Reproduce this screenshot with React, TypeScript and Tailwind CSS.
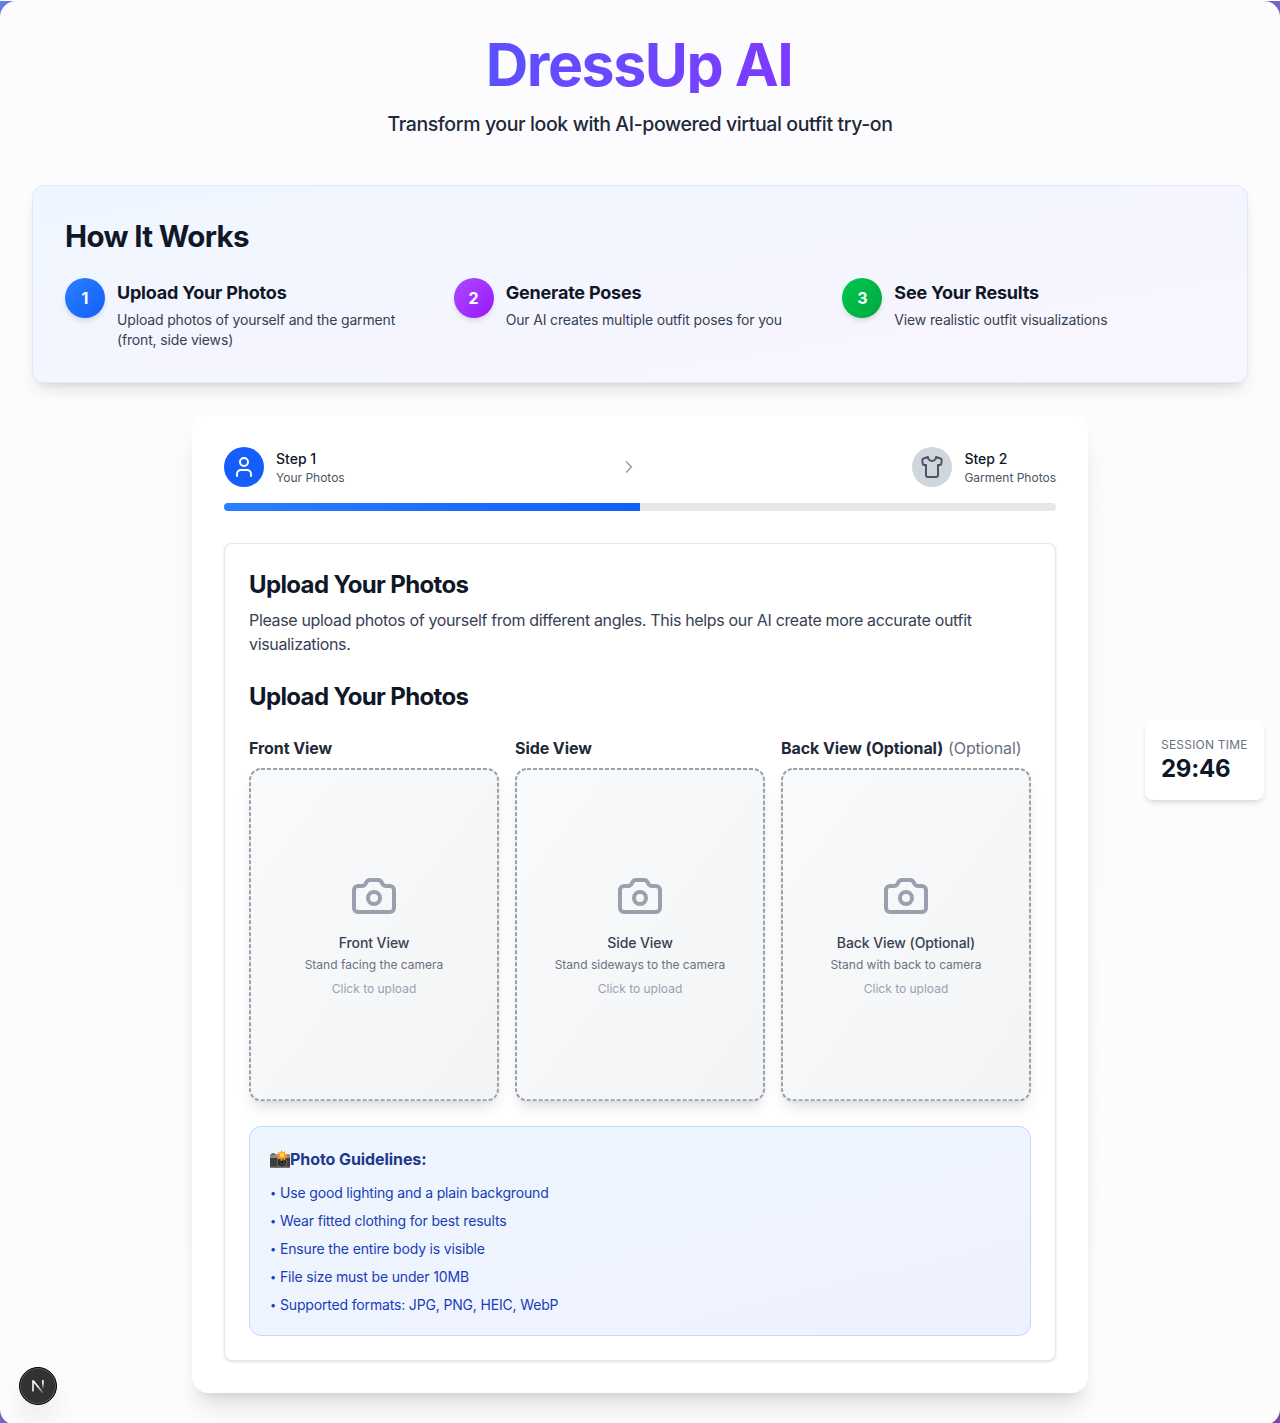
import React from "react";
import { Camera, ChevronRight, Shirt, User } from "lucide-react";

const howItWorks = [
  { n: "1", title: "Upload Your Photos", text: "Upload photos of yourself and the garment (front, side views)", tone: "bg-linear-to-br from-[#2b7fff] to-[#155dfc]" },
  { n: "2", title: "Generate Poses", text: "Our AI creates multiple outfit poses for you", tone: "bg-linear-to-br from-[#ad46ff] to-[#9810fa]" },
  { n: "3", title: "See Your Results", text: "View realistic outfit visualizations", tone: "bg-linear-to-br from-[#00c950] to-[#00a63e]" },
];

const views = [
  { label: "Front View", optional: false, hint: "Stand facing the camera" },
  { label: "Side View", optional: false, hint: "Stand sideways to the camera" },
  { label: "Back View (Optional)", optional: true, hint: "Stand with back to camera" },
];

const guidelines = [
  "Use good lighting and a plain background",
  "Wear fitted clothing for best results",
  "Ensure the entire body is visible",
  "File size must be under 10MB",
  "Supported formats: JPG, PNG, HEIC, WebP",
];

function CameraFlash() {
  return (
    <svg width="20" height="20" viewBox="0 0 20 20" className="mt-px shrink-0">
      <rect x="0" y="4.4" width="20" height="13.4" rx="1.2" fill="#3d3d3d" />
      <rect x="0" y="4.4" width="20" height="3.6" rx="1" fill="#8d8b86" />
      <rect x="0" y="16.4" width="20" height="1.4" rx="0.6" fill="#77756f" />
      <rect x="1.4" y="3.3" width="3.4" height="1.6" rx="0.5" fill="#5b5a57" />
      <circle cx="12" cy="12.2" r="5.2" fill="#76756f" />
      <circle cx="12" cy="12.2" r="4.3" fill="#222222" />
      <circle cx="12" cy="12.2" r="2.6" fill="#4b4c52" />
      <circle cx="12" cy="12.2" r="1.4" fill="#17181c" />
      <path d="M11.3 0l1.5 2.6L15.3 1l-.3 2.9 3-.2-1.9 2.1 1.8 1.9-2.8.1.1 2.6-2.4-1.4-1.6 2.3-1-2.6-2.9.9 1.1-2.5L6 5.8l2.6-1.3L7.5 2l2.8.9z" fill="#f59a1c" />
      <circle cx="12.1" cy="5" r="2.2" fill="#ffd75a" />
    </svg>
  );
}

function DashedOutline() {
  return (
    <svg className="pointer-events-none absolute inset-0 size-full text-gray-400">
      <rect x="1" y="1" rx="11" className="h-[calc(100%-2px)] w-[calc(100%-2px)]" fill="none" stroke="currentColor" strokeWidth="2" strokeDasharray="4 2" />
    </svg>
  );
}

function NextBadge() {
  return (
    <div className="absolute left-[19px] top-[1366px] flex size-[38px] items-center justify-center rounded-full border border-black bg-[#323232] shadow-[inset_0_0_0_1px_#5b5b5b,0_16px_32px_-8px_rgba(0,0,0,0.24)]">
      <svg width="14" height="14" viewBox="0 0 14 14" fill="none">
        <defs>
          <linearGradient id="stem" x1="0" y1="1" x2="0" y2="10" gradientUnits="userSpaceOnUse">
            <stop offset="0.3" stopColor="#fff" />
            <stop offset="1" stopColor="#fff" stopOpacity="0" />
          </linearGradient>
          <linearGradient id="slash" x1="7" y1="7" x2="12.5" y2="14" gradientUnits="userSpaceOnUse">
            <stop stopColor="#fff" />
            <stop offset="1" stopColor="#fff" stopOpacity="0.1" />
          </linearGradient>
        </defs>
        <path d="M2 12.6V1.6L12 14" stroke="url(#slash)" strokeWidth="1.6" strokeLinejoin="bevel" />
        <path d="M11.9 1v9" stroke="url(#stem)" strokeWidth="1.6" />
      </svg>
    </div>
  );
}

export default function App() {
  return (
    <div className="h-[1423px] overflow-hidden bg-white pt-px font-['Inter',sans-serif] text-gray-900">
      <div className="h-[1424px] bg-linear-to-br from-[#667eea] to-[#764ba2]">
        <div className="relative h-full rounded-2xl bg-linear-to-b from-[#fcfcff] to-[#fdfdfd] p-8">
          <header className="mb-[47px] text-center">
            <h1 className="mx-auto mb-[17px] h-[60px] w-fit bg-linear-to-r from-[#5b50ff] to-[#7e39ff] bg-clip-text pr-0.5 pt-0.5 text-[59px] font-bold leading-[60px] tracking-tight text-transparent">
              DressUp AI
            </h1>
            <p className="text-[19.5px] font-medium leading-7 tracking-[-0.39px] text-gray-800">Transform your look with AI-powered virtual outfit try-on</p>
          </header>

          <section className="mb-8 rounded-xl border border-blue-100 bg-linear-to-br from-blue-50 to-purple-50 p-8 shadow-lg">
            <h2 className="mb-6 text-[29.5px] font-bold leading-9 tracking-[-0.65px]">How It Works</h2>
            <div className="grid grid-cols-3 gap-4">
              {howItWorks.map((s) => (
                <div key={s.n} className="flex items-start gap-3 pr-4">
                  <div className={`flex size-10 shrink-0 items-center justify-center rounded-full font-bold text-white shadow-md ${s.tone}`}>{s.n}</div>
                  <div>
                    <h3 className="mb-[3px] pt-px text-lg font-bold leading-7 tracking-[-0.2px]">{s.title}</h3>
                    <p className="text-sm tracking-[-0.16px] text-gray-700">{s.text}</p>
                  </div>
                </div>
              ))}
            </div>
          </section>

          <main className="mx-auto w-[896px] rounded-2xl bg-white p-8 shadow-xl">
            <div className="mb-4 flex items-center justify-between">
              <div className="flex items-center gap-3">
                <div className="flex size-10 items-center justify-center rounded-full bg-blue-600 text-white"><User size={24} /></div>
                <div>
                  <p className="mb-px text-sm font-medium leading-5">Step 1</p>
                  <p className="-mb-px text-xs text-gray-600">Your Photos</p>
                </div>
              </div>
              <ChevronRight size={20} className="text-gray-400" />
              <div className="flex items-center gap-3">
                <div className="flex size-10 items-center justify-center rounded-full bg-gray-300 text-gray-600"><Shirt size={24} /></div>
                <div>
                  <p className="mb-px text-sm font-medium leading-5">Step 2</p>
                  <p className="-mb-px text-xs text-gray-600">Garment Photos</p>
                </div>
              </div>
            </div>
            <div className="mb-8 h-2 overflow-hidden rounded-full bg-gray-200">
              <div className="h-full w-1/2 bg-linear-to-r from-blue-500 to-blue-600" />
            </div>

            <div className="rounded-lg border border-gray-200 bg-white p-6 shadow-sm">
              <h2 className="mb-[7px] pt-px text-2xl font-bold tracking-[-0.64px]">Upload Your Photos</h2>
              <p className="mb-6 tracking-[-0.337px] text-gray-700">
                Please upload photos of yourself from different angles. This helps our AI create more accurate outfit visualizations.
              </p>
              <h2 className="mb-[23px] pt-px text-2xl font-bold tracking-[-0.64px]">Upload Your Photos</h2>
              <div className="mb-[25px] grid grid-cols-3 gap-4">
                {views.map((v) => (
                  <div key={v.label}>
                    <div className="mb-2 whitespace-nowrap font-bold tracking-[-0.08px] text-gray-800">
                      {v.label}
                      {v.optional && <span className="ml-[5px] font-normal tracking-[-0.15px] text-gray-500">(Optional)</span>}
                    </div>
                    <div className="relative flex aspect-3/4 flex-col items-center justify-center rounded-xl bg-linear-to-br from-gray-50 to-gray-100 shadow-lg">
                      <DashedOutline />
                      <Camera size={48} className="mb-[13px] text-gray-400" />
                      <p className="mb-1 text-sm font-medium tracking-[-0.08px] text-gray-700">{v.label}</p>
                      <p className="mb-2 text-xs text-gray-500">{v.hint}</p>
                      <p className="text-xs text-gray-400">Click to upload</p>
                    </div>
                  </div>
                ))}
              </div>
              <div className="rounded-xl border border-blue-200 bg-linear-to-br from-blue-50 to-indigo-50 p-5">
                <h4 className="mb-3 flex items-center font-bold tracking-[-0.08px] text-blue-900"><CameraFlash />Photo Guidelines:</h4>
                <ul className="space-y-2 text-sm tracking-[-0.165px] text-blue-800">
                  {guidelines.map((g) => (
                    <li key={g} className="flex">
                      <span className="w-2.5 text-[11px] leading-5">•</span>
                      {g}
                    </li>
                  ))}
                </ul>
              </div>
            </div>
          </main>

          <aside className="absolute right-4 top-[719px] w-[119px] rounded-lg bg-white px-4 pb-[15px] pt-[17px] shadow-md">
            <div className="whitespace-nowrap text-xs uppercase tracking-[0.21px] text-gray-500">Session Time</div>
            <div className="text-2xl font-bold tracking-[-0.25px]">29:46</div>
          </aside>
          <NextBadge />
        </div>
      </div>
    </div>
  );
}
